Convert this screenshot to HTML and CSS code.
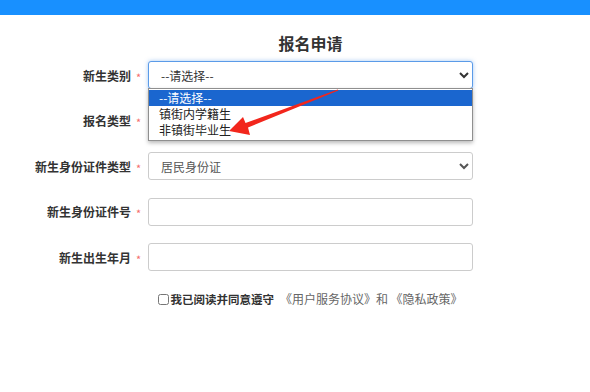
FILE: index.html
```html
<!DOCTYPE html>
<html lang="zh">
<head>
  <meta charset="UTF-8">
  <title>报名申请</title>
  <link rel="stylesheet" href="styles.css">
</head>
<body>

<div class="topbar"></div>

<div class="page">
  <h2 class="title">报名申请</h2>

  <div class="form">
    <div class="row">
      <label class="label">新生类别</label>
      <span class="star">*</span>
      <div class="field">
        <select class="ctrl focus">
          <option>--请选择--</option>
        </select>
        <div class="dropdown">
          <div class="opt active">--请选择--</div>
          <div class="opt">镇街内学籍生</div>
          <div class="opt">非镇街毕业生</div>
        </div>
        <svg class="arrow" width="200" height="90" viewBox="0 0 200 90">
          <polygon points="81,70 102,74 100,66.5 190.3,29.6 189.7,28.4 97.5,62 95,56" fill="#f2261c"/>
        </svg>
      </div>
    </div>

    <div class="row">
      <label class="label">报名类型</label>
      <span class="star">*</span>
      <div class="field">
        <select class="ctrl">
          <option>--请选择--</option>
        </select>
      </div>
    </div>

    <div class="row">
      <label class="label">新生身份证件类型</label>
      <span class="star">*</span>
      <div class="field">
        <select class="ctrl grey">
          <option>居民身份证</option>
        </select>
      </div>
    </div>

    <div class="row">
      <label class="label">新生身份证件号</label>
      <span class="star">*</span>
      <div class="field">
        <input class="ctrl" type="text">
      </div>
    </div>

    <div class="row">
      <label class="label">新生出生年月</label>
      <span class="star">*</span>
      <div class="field">
        <input class="ctrl" type="text">
      </div>
    </div>

    <div class="agree">
      <input type="checkbox" class="check"><b>我已阅读并同意遵守</b><span class="doc">《用户服务协议》和 《隐私政策》</span>
    </div>
  </div>
</div>

</body>
</html>
```

FILE: styles.css
```css
body {
  margin: 0;
  font-family: "Noto Sans CJK SC", "Liberation Sans", sans-serif;
  background-color: #fff;
  color: #333;
}
.topbar {
  height: 15px;
  background-color: #1890ff;
}
.page {
  width: 473px;
}
.title {
  margin: 16px 0 6px 148px;
  width: 325px;
  text-align: center;
  font-size: 16px;
  line-height: 24px;
  font-weight: bold;
  color: #333;
}
.row {
  display: flex;
  align-items: center;
  height: 28px;
  margin-bottom: 17.5px;
}
.label {
  width: 131px;
  text-align: right;
  font-size: 12px;
  font-weight: bold;
  color: #333;
}
.star {
  width: 17px;
  padding-left: 5px;
  box-sizing: border-box;
  color: #f56c6c;
  font-size: 11px;
  line-height: 14px;
  padding-top: 3px;
}
.field {
  position: relative;
  width: 325px;
  height: 28px;
}
.ctrl {
  box-sizing: border-box;
  width: 100%;
  height: 28px;
  margin: 0;
  padding: 0 6px 0 8px;
  border: 1px solid #ccc;
  border-radius: 3px;
  background-color: #fff;
  font-family: "Noto Sans CJK SC", "Liberation Sans", sans-serif;
  font-size: 12px;
  color: #333;
}
.ctrl.focus {
  border-color: #5b9be8;
  box-shadow: 0 0 4px rgba(91, 155, 232, 0.55);
  outline: none;
}
.ctrl.grey {
  color: #555;
}
.dropdown {
  position: absolute;
  top: 27px;
  left: 0;
  right: 0;
  z-index: 2;
  padding: 1px 0 2px;
  background-color: #fff;
  border: 1px solid #8f8f8f;
  box-shadow: 0 2px 4px rgba(0, 0, 0, 0.28);
}
.opt {
  height: 16px;
  line-height: 16px;
  padding-left: 10px;
  font-size: 12px;
  color: #222;
}
.opt.active {
  background-color: #1a66cf;
  color: #fff;
}
.arrow {
  position: absolute;
  left: 0;
  top: 0;
  z-index: 3;
}
.agree {
  margin-left: 148px;
  width: 325px;
  text-align: center;
  font-size: 12px;
  line-height: 20px;
}
.check {
  width: 11px;
  height: 11px;
  margin: 0 1px 0 0;
  vertical-align: -1px;
}
.agree b {
  font-size: 11.5px;
  color: #333;
}
.doc {
  color: #666;
  font-size: 12px;
  margin-left: 6px;
}
```
